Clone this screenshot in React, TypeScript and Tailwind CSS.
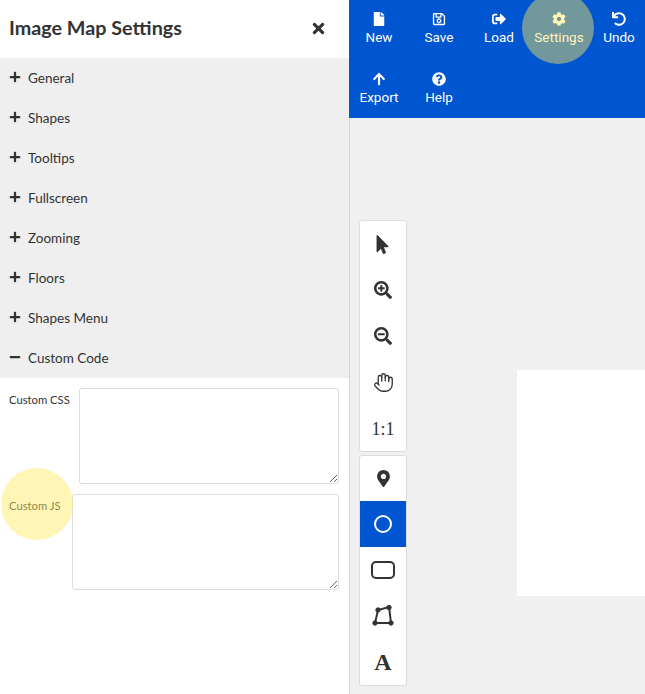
import { Hand } from "lucide-react";
import { FaArrowUp, FaCog, FaFile, FaMapMarkerAlt, FaMinus, FaMousePointer, FaPlus, FaQuestionCircle, FaRegSave, FaSearchMinus, FaSearchPlus, FaSignOutAlt, FaTimes, FaUndo } from "react-icons/fa";

const sections = ["General", "Shapes", "Tooltips", "Fullscreen", "Zooming", "Floors", "Shapes Menu"];

const topRow = [
  { label: "New", icon: <FaFile size={14} /> },
  { label: "Save", icon: <FaRegSave size={14} /> },
  { label: "Load", icon: <FaSignOutAlt size={14} /> },
  { label: "Settings", icon: <FaCog size={14} /> },
  { label: "Undo", icon: <FaUndo size={14} /> },
];

const bottomRow = [
  { label: "Export", icon: <FaArrowUp size={14} /> },
  { label: "Help", icon: <FaQuestionCircle size={14} /> },
];

function ToolButton({ label, icon }: { label: string; icon: React.ReactNode }) {
  return (
    <div className="w-[60px] h-[60px] shrink-0 flex flex-col items-center pt-[12px] text-white">
      <div className="h-[14px] flex items-center justify-center">{icon}</div>
      <span className="mt-[2px] text-[13.5px] leading-[18px]">{label}</span>
    </div>
  );
}

function PaletteButton({ children, active, first }: { children: React.ReactNode; active?: boolean; first?: boolean }) {
  return (
    <div className={`${first ? "h-[45px]" : "h-[46px]"} flex items-center justify-center ${active ? "bg-[#0055d0] text-white" : "text-[#333]"}`}>
      {children}
    </div>
  );
}

export default function App() {
  return (
    <div className="relative w-[645px] h-[694px] overflow-hidden flex bg-white text-[#333] font-['Lato','Noto_Sans',sans-serif]">
      {/* SETTINGS PANEL */}
      <div className="w-[349px] h-full shrink-0 bg-white">
        <div className="h-[58px] flex items-center justify-between pl-[9px] pr-[22px]">
          <h1 className="text-[19.75px] font-bold pb-[2px]">Image Map Settings</h1>
          <FaTimes size={17} className="mb-[2px]" />
        </div>

        <div className="bg-[#efefef]">
          {sections.map((s) => (
            <div key={s} className="h-[40px] flex items-center pl-[9px]">
              <FaPlus size={12} className="mb-[2px]" />
              <span className="ml-[7px] text-[13.5px]">{s}</span>
            </div>
          ))}
          <div className="h-[40px] flex items-center pl-[9px]">
            <FaMinus size={12} className="mb-[2px]" />
            <span className="ml-[7px] text-[13.5px]">Custom Code</span>
          </div>
        </div>

        <div className="pt-[10px] pl-[9px] pr-[10px]">
          <div className="flex">
            <label className="w-[70px] shrink-0 text-[11.25px] leading-[24px]">Custom CSS</label>
            <textarea className="flex-1 h-[96px] border border-[#dddddd] rounded-[3px] bg-white" />
          </div>
          <div className="flex mt-[10px]">
            <label className="w-[63px] shrink-0 text-[11.25px] leading-[24px]">Custom JS</label>
            <textarea className="flex-1 h-[96px] border border-[#dddddd] rounded-[3px] bg-white" />
          </div>
        </div>
      </div>

      {/* EDITOR */}
      <div className="flex-1 min-w-0 flex flex-col bg-[#f0f0f0]">
        <div className="h-[118px] shrink-0 bg-[#0055d0] font-['Roboto',sans-serif]">
          <div className="flex">
            {topRow.map((b) => (
              <ToolButton key={b.label} label={b.label} icon={b.icon} />
            ))}
          </div>
          <div className="flex">
            {bottomRow.map((b) => (
              <ToolButton key={b.label} label={b.label} icon={b.icon} />
            ))}
          </div>
        </div>

        <div className="flex-1 flex items-start border-l border-[#d8d8d8] pl-[9px] pt-[102px]">
          <div className="w-[48px] shrink-0 flex flex-col gap-[3px]">
            <div className="bg-white rounded-[3px] border border-[#dddddd]">
              <PaletteButton><FaMousePointer size={19} className="-ml-[2px]" /></PaletteButton>
              <PaletteButton><FaSearchPlus size={18} /></PaletteButton>
              <PaletteButton><FaSearchMinus size={18} /></PaletteButton>
              <PaletteButton><Hand size={21} strokeWidth={1.5} /></PaletteButton>
              <PaletteButton><span className="pt-[2px] text-[18px] font-['Liberation_Serif',serif]">1:1</span></PaletteButton>
            </div>
            <div className="bg-white rounded-[3px] border border-[#dddddd]">
              <PaletteButton first><FaMapMarkerAlt size={17} /></PaletteButton>
              <PaletteButton active>
                <svg width="20" height="20" viewBox="0 0 20 20" fill="none" stroke="currentColor" strokeWidth="2"><circle cx="10" cy="10" r="8" /></svg>
              </PaletteButton>
              <PaletteButton>
                <svg width="24" height="18" viewBox="0 0 24 18" fill="none" stroke="currentColor" strokeWidth="2"><rect x="1" y="1" width="22" height="16" rx="4" /></svg>
              </PaletteButton>
              <PaletteButton>
                <svg width="24" height="24" viewBox="0 0 24 24" fill="currentColor" stroke="currentColor">
                  <path d="M4 19 H20 L18 3 L7 6 Z" fill="none" strokeWidth="2" />
                  <circle cx="4" cy="19" r="2.2" />
                  <circle cx="20" cy="19" r="2.2" />
                  <circle cx="18" cy="3.5" r="2.2" />
                  <circle cx="7" cy="6" r="2.2" />
                </svg>
              </PaletteButton>
              <PaletteButton><span className="text-[24px] font-bold font-['Liberation_Serif',serif]">A</span></PaletteButton>
            </div>
          </div>
          <div className="ml-[110px] mt-[150px] flex-1 h-[226px] bg-white" />
        </div>
      </div>

      {/* HIGHLIGHT SPOTS */}
      <div className="absolute left-[522px] top-[-8px] w-[72px] h-[72px] rounded-full bg-[#ffe95c]/45" />
      <div className="absolute left-[1px] top-[468px] w-[72px] h-[72px] rounded-full bg-[#ffe95c]/45" />
    </div>
  );
}
